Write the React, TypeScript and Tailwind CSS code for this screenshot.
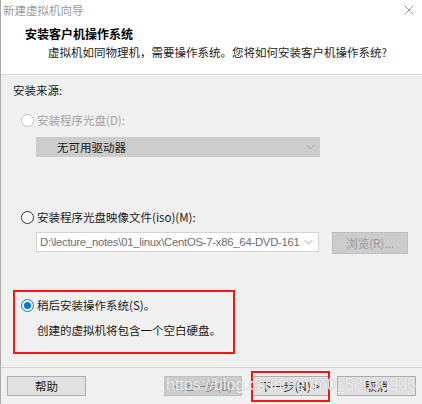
import React from "react";

const cjk = { fontFamily: '"Noto Sans CJK SC", "Noto Sans", sans-serif' };

function Chevron() {
  return (
    <svg width="9" height="6" viewBox="0 0 9 6" className="shrink-0">
      <path d="M0.5 1 L4.5 5 L8.5 1" fill="none" stroke="#a8a8a8" strokeWidth="1" />
    </svg>
  );
}

function Radio({ state }: { state: "disabled" | "off" | "on" }) {
  if (state === "on") {
    return (
      <span className="w-[13px] h-[13px] rounded-full border border-[#0078d7] bg-white flex items-center justify-center shrink-0">
        <span className="w-[7px] h-[7px] rounded-full bg-[#0078d7]" />
      </span>
    );
  }
  return (
    <span
      className={
        "w-[13px] h-[13px] rounded-full border bg-white shrink-0 " +
        (state === "disabled" ? "border-[#c4c4c4]" : "border-[#333333]")
      }
    />
  );
}

export default function App() {
  return (
    <div
      className="relative w-[422px] h-[404px] overflow-hidden flex flex-col border-l border-[#a9a9a9] bg-[#f0f0f0] text-[11.5px] leading-[16px] text-[#1a1a1a]"
      style={cjk}
    >
      {/* Header */}
      <div className="h-[74px] bg-white flex flex-col shrink-0">
        <div className="flex items-start justify-between pl-[2px] pr-[8px] pt-[2px]">
          <span className="text-[#9a9a9a]">新建虚拟机向导</span>
          <svg width="10" height="10" viewBox="0 0 10 10" className="mt-[3px]">
            <path d="M0.5 0.5 L9.5 9.5 M9.5 0.5 L0.5 9.5" stroke="#9a9a9a" strokeWidth="1" />
          </svg>
        </div>
        <div className="pl-[24px] mt-[8px] font-bold text-[12px] text-black">安装客户机操作系统</div>
        <div className="pl-[47px] mt-[2px] text-[#222]">虚拟机如同物理机，需要操作系统。您将如何安装客户机操作系统?</div>
      </div>
      <div className="h-[1px] bg-[#d9d9d9] shrink-0" />

      {/* Body */}
      <div className="flex-1 flex flex-col pl-[12px]">
        <div className="mt-[7px]">安装来源:</div>

        <div className="mt-[14px] ml-[8px] flex items-center gap-[3px] text-[#a3a3a3]">
          <Radio state="disabled" />
          <span>安装程序光盘(D):</span>
        </div>

        <div className="mt-[9px] ml-[23px] w-[284px] h-[20px] bg-[#cccccc] flex items-center justify-between pl-[21px] pr-[5px]">
          <span className="text-[#1a1a1a]">无可用驱动器</span>
          <Chevron />
        </div>

        <div className="mt-[52px] ml-[8px] flex items-center gap-[3px]">
          <Radio state="off" />
          <span>安装程序光盘映像文件(iso)(M):</span>
        </div>

        <div className="mt-[7px] ml-[23px] flex items-start gap-[13px]">
          <div className="w-[283px] h-[20px] bg-white border border-[#d4d4d4] flex items-center justify-between pl-[3px] pr-[5px]">
            <span
              className="text-[#6e6e6e] text-[11.3px] whitespace-nowrap"
              style={{ fontFamily: '"Liberation Sans", sans-serif', letterSpacing: "-0.25px" }}
            >
              D:\lecture_notes\01_linux\CentOS-7-x86_64-DVD-161
            </span>
            <Chevron />
          </div>
          <div className="w-[76px] h-[22px] bg-[#cccccc] border border-[#bfbfbf] flex items-center justify-center text-[#9b9b9b]">
            浏览(R)...
          </div>
        </div>

        <div className="mt-[36px] w-[222px] h-[64px] border-2 border-[#ee1a1a] flex flex-col pl-[6px] pt-[5px]">
          <div className="flex items-center gap-[3px]">
            <Radio state="on" />
            <span>稍后安装操作系统(S)。</span>
          </div>
          <div className="mt-[9px] pl-[16px]">创建的虚拟机将包含一个空白硬盘。</div>
        </div>
      </div>

      <div className="h-[1px] bg-[#d6d6d6] shrink-0" />

      {/* Footer */}
      <div className="h-[36px] shrink-0 flex items-start pt-[8px] pl-[6px]">
        <div className="w-[79px] h-[20px] bg-[#e1e1e1] border border-[#adadad] flex items-center justify-center">帮助</div>
        <div className="ml-[78px] w-[78px] h-[20px] bg-[#cccccc] border border-[#bfbfbf] flex items-center justify-center text-[#838383]">
          &lt; 上一步(B)
        </div>
        <div className="ml-[9px] w-[78px] h-[20px] bg-[#e1e1e1] border border-[#adadad] flex items-center justify-center">
          下一步(N) &gt;
        </div>
        <div className="ml-[8px] w-[79px] h-[20px] bg-[#e1e1e1] border border-[#adadad] flex items-center justify-center">取消</div>
      </div>

      {/* Red annotation around Next */}
      <div className="absolute left-[250px] top-[371px] w-[79px] h-[31px] border-2 border-[#ee1a1a]" />

      {/* Watermark */}
      <div
        className="absolute left-[165px] top-[376px] text-[16px] leading-[18px] whitespace-nowrap text-white/80"
        style={{
          fontFamily: '"Liberation Sans", Arial, sans-serif',
          textShadow: "0 0 1px rgba(140,140,140,0.8)",
        }}
      >
        https://blog.csdn.net/m0_58030905
      </div>
    </div>
  );
}
